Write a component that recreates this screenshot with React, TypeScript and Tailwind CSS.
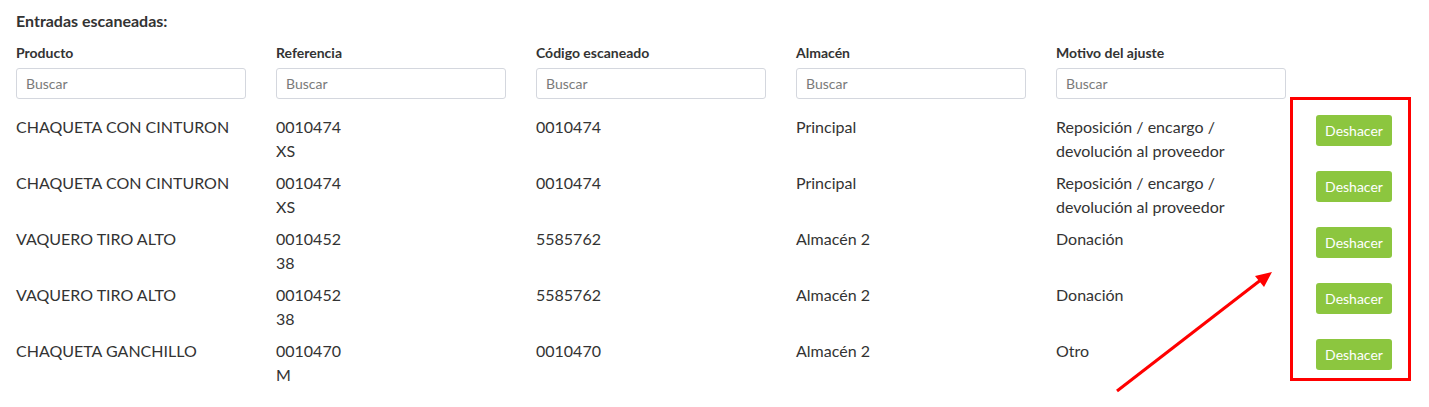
import React from 'react';

type Row = {
  producto: string;
  ref: string;
  talla: string;
  codigo: string;
  almacen: string;
  motivo: string[];
};

const rows: Row[] = [
  { producto: 'CHAQUETA CON CINTURON', ref: '0010474', talla: 'XS', codigo: '0010474', almacen: 'Principal', motivo: ['Reposición / encargo /', 'devolución al proveedor'] },
  { producto: 'CHAQUETA CON CINTURON', ref: '0010474', talla: 'XS', codigo: '0010474', almacen: 'Principal', motivo: ['Reposición / encargo /', 'devolución al proveedor'] },
  { producto: 'VAQUERO TIRO ALTO', ref: '0010452', talla: '38', codigo: '5585762', almacen: 'Almacén 2', motivo: ['Donación'] },
  { producto: 'VAQUERO TIRO ALTO', ref: '0010452', talla: '38', codigo: '5585762', almacen: 'Almacén 2', motivo: ['Donación'] },
  { producto: 'CHAQUETA GANCHILLO', ref: '0010470', talla: 'M', codigo: '0010470', almacen: 'Almacén 2', motivo: ['Otro'] },
];

const headers = ['Producto', 'Referencia', 'Código escaneado', 'Almacén', 'Motivo del ajuste'];

const grid = 'grid grid-cols-[260px_260px_260px_260px_260px_auto]';

export default function App() {
  return (
    <div
      className="relative w-[1429px] h-[407px] overflow-hidden bg-white px-4 text-[#333333]"
      style={{ fontFamily: 'Lato, "Open Sans", sans-serif' }}
    >
      <h3 className="pt-[11px] text-[16px] font-bold leading-5">Entradas escaneadas:</h3>

      {/* Column headers */}
      <div className={`${grid} mt-[12px]`}>
        {headers.map((h) => (
          <div key={h} className="text-[14px] font-bold leading-5">{h}</div>
        ))}
        <div />
      </div>

      {/* Filters */}
      <div className={`${grid} mt-[5px]`}>
        {headers.map((h) => (
          <div key={h}>
            <input
              placeholder="Buscar"
              className="w-[230px] h-[31px] rounded-[3px] border border-[#d4d7de] px-[9px] text-[14px] text-[#333] placeholder:text-[#7a7a7a] outline-none"
            />
          </div>
        ))}
        <div />
      </div>

      {/* Rows */}
      <div className="mt-4 flex flex-col gap-2">
        {rows.map((r, i) => (
          <div key={i} className={`${grid} h-12 text-[16px] leading-6`}>
            <div>{r.producto}</div>
            <div>
              <div>{r.ref}</div>
              <div>{r.talla}</div>
            </div>
            <div>{r.codigo}</div>
            <div>{r.almacen}</div>
            <div>
              {r.motivo.map((m) => (
                <div key={m}>{m}</div>
              ))}
            </div>
            <div>
              <button className="w-[76px] h-[31px] rounded-[3px] bg-[#8cc63f] text-[14px] text-white">
                Deshacer
              </button>
            </div>
          </div>
        ))}
      </div>

      {/* Annotation: red frame */}
      <div className="absolute left-[1290px] top-[97px] w-[121px] h-[284px] border-[3px] border-[#ff0000]" />

      {/* Annotation: arrow */}
      <svg className="absolute left-0 top-0 pointer-events-none" width="1429" height="407">
        <line x1="1117" y1="391" x2="1262" y2="279" stroke="#ff0000" strokeWidth="3" />
        <polygon points="1272,272 1255,276 1264,287" fill="#ff0000" />
      </svg>
    </div>
  );
}
